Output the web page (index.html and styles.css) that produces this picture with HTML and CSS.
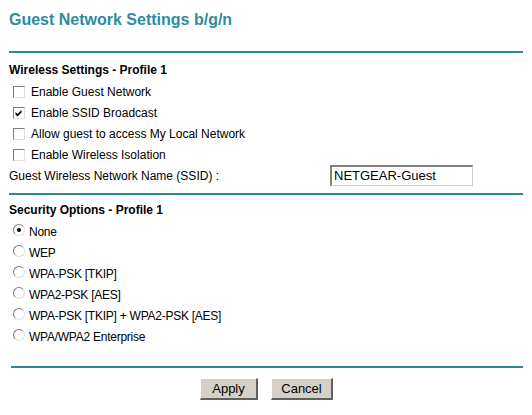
FILE: index.html
```html
<!DOCTYPE html>
<html>
<head>
<meta charset="utf-8">
<link rel="stylesheet" href="styles.css">
</head>
<body>
<div class="page">
  <h1 class="title">Guest Network Settings b/g/n</h1>
  <div class="rule rule-top"></div>

  <div class="section-head">Wireless Settings - Profile 1</div>
  <div class="row check-row">
    <span class="cbox"></span><span class="lbl">Enable Guest Network</span>
  </div>
  <div class="row check-row">
    <span class="cbox"><svg width="10" height="10" viewBox="0 0 10 10"><path d="M1.5 4 L3.5 6 L7.5 2 L7.5 4.5 L3.5 8.5 L1.5 6.5 Z" fill="#000"/></svg></span><span class="lbl">Enable SSID Broadcast</span>
  </div>
  <div class="row check-row">
    <span class="cbox"></span><span class="lbl">Allow guest to access My Local Network</span>
  </div>
  <div class="row check-row">
    <span class="cbox"></span><span class="lbl">Enable Wireless Isolation</span>
  </div>
  <div class="row ssid-row">
    <span class="ssid-lbl">Guest Wireless Network Name (SSID) :</span>
    <span class="ssid-input">NETGEAR-Guest</span>
  </div>
  <div class="rule rule-mid"></div>

  <div class="section-head sec2">Security Options - Profile 1</div>
  <div class="row radio-row"><span class="radio on"></span><span class="rlbl">None</span></div>
  <div class="row radio-row"><span class="radio"></span><span class="rlbl">WEP</span></div>
  <div class="row radio-row"><span class="radio"></span><span class="rlbl">WPA-PSK [TKIP]</span></div>
  <div class="row radio-row"><span class="radio"></span><span class="rlbl">WPA2-PSK [AES]</span></div>
  <div class="row radio-row"><span class="radio"></span><span class="rlbl">WPA-PSK [TKIP] + WPA2-PSK [AES]</span></div>
  <div class="row radio-row"><span class="radio"></span><span class="rlbl">WPA/WPA2 Enterprise</span></div>

  <div class="rule rule-bot"></div>
  <div class="buttons">
    <span class="btn btn-apply">Apply</span>
    <span class="btn btn-cancel">Cancel</span>
  </div>
</div>
</body>
</html>
```
FILE: styles.css
```css
html, body {
  margin: 0;
  padding: 0;
  background: #ffffff;
}
.page {
  width: 532px;
  height: 415px;
  font-family: "Liberation Sans", Arial, sans-serif;
  color: #000;
  overflow: hidden;
}
.title {
  margin: 0;
  padding: 10px 0 0 9px;
  font-size: 16px;
  line-height: 20px;
  font-weight: bold;
  color: #2f8ba3;
}
.rule {
  height: 2px;
  background: #2e8797;
  margin-left: 9px;
  width: 514px;
}
.rule-top { margin-top: 21px; }
.section-head {
  font-size: 12px;
  font-weight: bold;
  line-height: 21px;
  padding-left: 9px;
  margin-top: 7px;
}
.sec2 { margin-top: 5px; }
.row {
  height: 21px;
  display: flex;
  align-items: center;
}
.check-row { padding-left: 13px; }
.cbox {
  box-sizing: border-box;
  width: 12px;
  height: 12px;
  border-top: 1px solid #808080;
  border-left: 1px solid #808080;
  border-right: 1px solid #e0e0e0;
  border-bottom: 1px solid #e0e0e0;
  background: #fff;
  display: flex;
}
.cbox svg { display: block; }
.lbl {
  font-size: 12px;
  margin-left: 6px;
}
.ssid-row {
  padding-left: 9px;
  font-size: 12px;
}
.ssid-lbl { width: 321px; }
.ssid-input {
  box-sizing: border-box;
  width: 143px;
  height: 21px;
  border-top: 2px solid #808080;
  border-left: 2px solid #808080;
  border-right: 1px solid #d4d0c8;
  border-bottom: 1px solid #d4d0c8;
  font-size: 13px;
  line-height: 18px;
  padding-left: 2px;
}
.rule-mid { margin-top: 7px; }
.radio-row { padding-left: 13px; }
.radio {
  box-sizing: border-box;
  width: 12px;
  height: 12px;
  border-radius: 50%;
  border: 1px solid;
  border-color: #808080 #e0e0e0 #e0e0e0 #808080;
  background: #fff;
  position: relative;
  margin-top: -3px;
}
.radio.on::after {
  content: "";
  position: absolute;
  left: 3px;
  top: 3px;
  width: 4px;
  height: 4px;
  border-radius: 50%;
  background: #000;
}
.rlbl {
  font-size: 12px;
  letter-spacing: -0.25px;
  margin-left: 4px;
}
.rule-bot { margin-top: 19px; margin-left: 11px; width: 512px; }
.buttons {
  display: flex;
  gap: 13px;
  padding-left: 200px;
  margin-top: 10px;
}
.btn {
  box-sizing: border-box;
  height: 22px;
  background: #d4d0c8;
  border-top: 1px solid #ffffff;
  border-left: 1px solid #ffffff;
  border-right: 2px solid #606060;
  border-bottom: 2px solid #606060;
  font-size: 13px;
  line-height: 19px;
  text-align: center;
}
.btn-apply { width: 58px; }
.btn-cancel { width: 62px; }
```
